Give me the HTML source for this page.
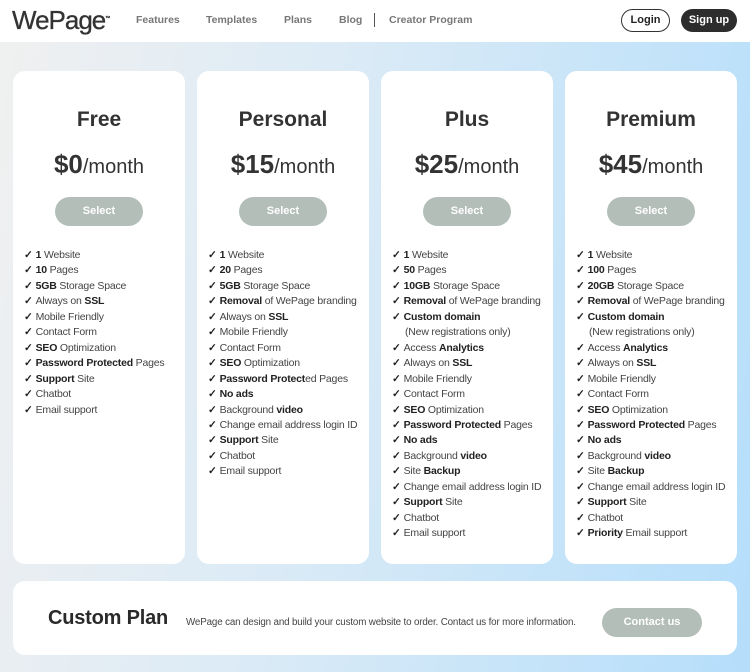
<!DOCTYPE html>
<html><head><meta charset="utf-8"><style>
*{margin:0;padding:0;box-sizing:border-box}
body{width:750px;height:672px;overflow:hidden;font-family:"Liberation Sans",sans-serif;color:#333;background:linear-gradient(100deg,#f0f0f0 0%,#dcebf6 40%,#b5defb 100%);position:relative}
.hdr{position:absolute;left:0;top:0;width:750px;height:42px;background:#fff}
.logo{position:absolute;left:12px;top:5px;font-size:26px;letter-spacing:-1px;color:#333;-webkit-text-stroke:0.3px #333}
.nav{position:absolute;top:14px;font-size:10.5px;font-weight:bold;color:#777}
.sep{position:absolute;left:374px;top:13px;width:1px;height:14px;background:#555}
.btn{position:absolute;top:9px;height:23px;border-radius:12px;font-size:11px;font-weight:bold;text-align:center;line-height:21px}
.card{position:absolute;top:71px;width:172px;height:493px;background:#fff;border-radius:12px}
.t{position:absolute;top:107px;width:100%;text-align:center;font-size:21px;font-weight:bold}
.p{position:absolute;top:148px;width:100%;text-align:center;font-size:20px}
.p b{font-size:26px}
.sel{position:absolute;top:126px;left:42px;width:88px;height:29px;border-radius:15px;background:#b3beb9;color:#fff;font-weight:bold;font-size:11px;text-align:center;line-height:29px}
ul{position:absolute;top:177px;left:11px;list-style:none;font-size:10.5px;line-height:15.45px;letter-spacing:-0.2px;color:#444}
li:before{content:"✓";font-weight:bold;color:#222;margin-right:3px}
li.n{padding-left:10px}li.n:before{content:""}
li b{color:#222}
.custom{position:absolute;left:13px;top:581px;width:724px;height:74px;background:#fff;border-radius:12px}
</style></head><body>
<div class="hdr">
<div class="logo">WePage<sup style="font-size:5px">™</sup></div>
<div class="nav" style="left:136px">Features</div>
<div class="nav" style="left:206px">Templates</div>
<div class="nav" style="left:284px">Plans</div>
<div class="nav" style="left:339px">Blog</div>
<div class="sep"></div>
<div class="nav" style="left:389px">Creator Program</div>
<div class="btn" style="left:621px;width:49px;border:1px solid #333;color:#222">Login</div>
<div class="btn" style="left:681px;width:56px;background:#2d2d2d;color:#fff;line-height:23px">Sign up</div>
</div>

<div class="card" style="left:13px">
<div class="t" style="top:37px">Free</div>
<div class="p" style="top:78px"><b>$0</b>/month</div>
<div class="sel">Select</div>
<ul>
<li><b>1</b> Website</li><li><b>10</b> Pages</li><li><b>5GB</b> Storage Space</li><li>Always on <b>SSL</b></li><li>Mobile Friendly</li><li>Contact Form</li><li><b>SEO</b> Optimization</li><li><b>Password Protected</b> Pages</li><li><b>Support</b> Site</li><li>Chatbot</li><li>Email support</li>
</ul></div>

<div class="card" style="left:197px">
<div class="t" style="top:37px">Personal</div>
<div class="p" style="top:78px"><b>$15</b>/month</div>
<div class="sel">Select</div>
<ul>
<li><b>1</b> Website</li><li><b>20</b> Pages</li><li><b>5GB</b> Storage Space</li><li><b>Removal</b> of WePage branding</li><li>Always on <b>SSL</b></li><li>Mobile Friendly</li><li>Contact Form</li><li><b>SEO</b> Optimization</li><li><b>Password Protect</b>ed Pages</li><li><b>No ads</b></li><li>Background <b>video</b></li><li>Change email address login ID</li><li><b>Support</b> Site</li><li>Chatbot</li><li>Email support</li>
</ul></div>

<div class="card" style="left:381px">
<div class="t" style="top:37px">Plus</div>
<div class="p" style="top:78px"><b>$25</b>/month</div>
<div class="sel">Select</div>
<ul>
<li><b>1</b> Website</li><li><b>50</b> Pages</li><li><b>10GB</b> Storage Space</li><li><b>Removal</b> of WePage branding</li><li><b>Custom domain</b></li><li class="n">(New registrations only)</li><li>Access <b>Analytics</b></li><li>Always on <b>SSL</b></li><li>Mobile Friendly</li><li>Contact Form</li><li><b>SEO</b> Optimization</li><li><b>Password Protected</b> Pages</li><li><b>No ads</b></li><li>Background <b>video</b></li><li>Site <b>Backup</b></li><li>Change email address login ID</li><li><b>Support</b> Site</li><li>Chatbot</li><li>Email support</li>
</ul></div>

<div class="card" style="left:565px">
<div class="t" style="top:37px">Premium</div>
<div class="p" style="top:78px"><b>$45</b>/month</div>
<div class="sel">Select</div>
<ul>
<li><b>1</b> Website</li><li><b>100</b> Pages</li><li><b>20GB</b> Storage Space</li><li><b>Removal</b> of WePage branding</li><li><b>Custom domain</b></li><li class="n">(New registrations only)</li><li>Access <b>Analytics</b></li><li>Always on <b>SSL</b></li><li>Mobile Friendly</li><li>Contact Form</li><li><b>SEO</b> Optimization</li><li><b>Password Protected</b> Pages</li><li><b>No ads</b></li><li>Background <b>video</b></li><li>Site <b>Backup</b></li><li>Change email address login ID</li><li><b>Support</b> Site</li><li>Chatbot</li><li><b>Priority</b> Email support</li>
</ul></div>

<div class="custom">
<div style="position:absolute;left:35px;top:26px;font-size:20px;font-weight:bold;color:#2a2a2a;letter-spacing:-0.2px">Custom Plan</div>
<div style="position:absolute;left:173px;top:36px;font-size:9.8px;letter-spacing:-0.15px;color:#444">WePage can design and build your custom website to order. Contact us for more information.</div>
<div style="position:absolute;left:589px;top:27px;width:100px;height:29px;border-radius:15px;background:#b3beb9;color:#fff;font-weight:bold;font-size:11px;text-align:center;line-height:29px">Contact us</div>
</div>
</body></html>
